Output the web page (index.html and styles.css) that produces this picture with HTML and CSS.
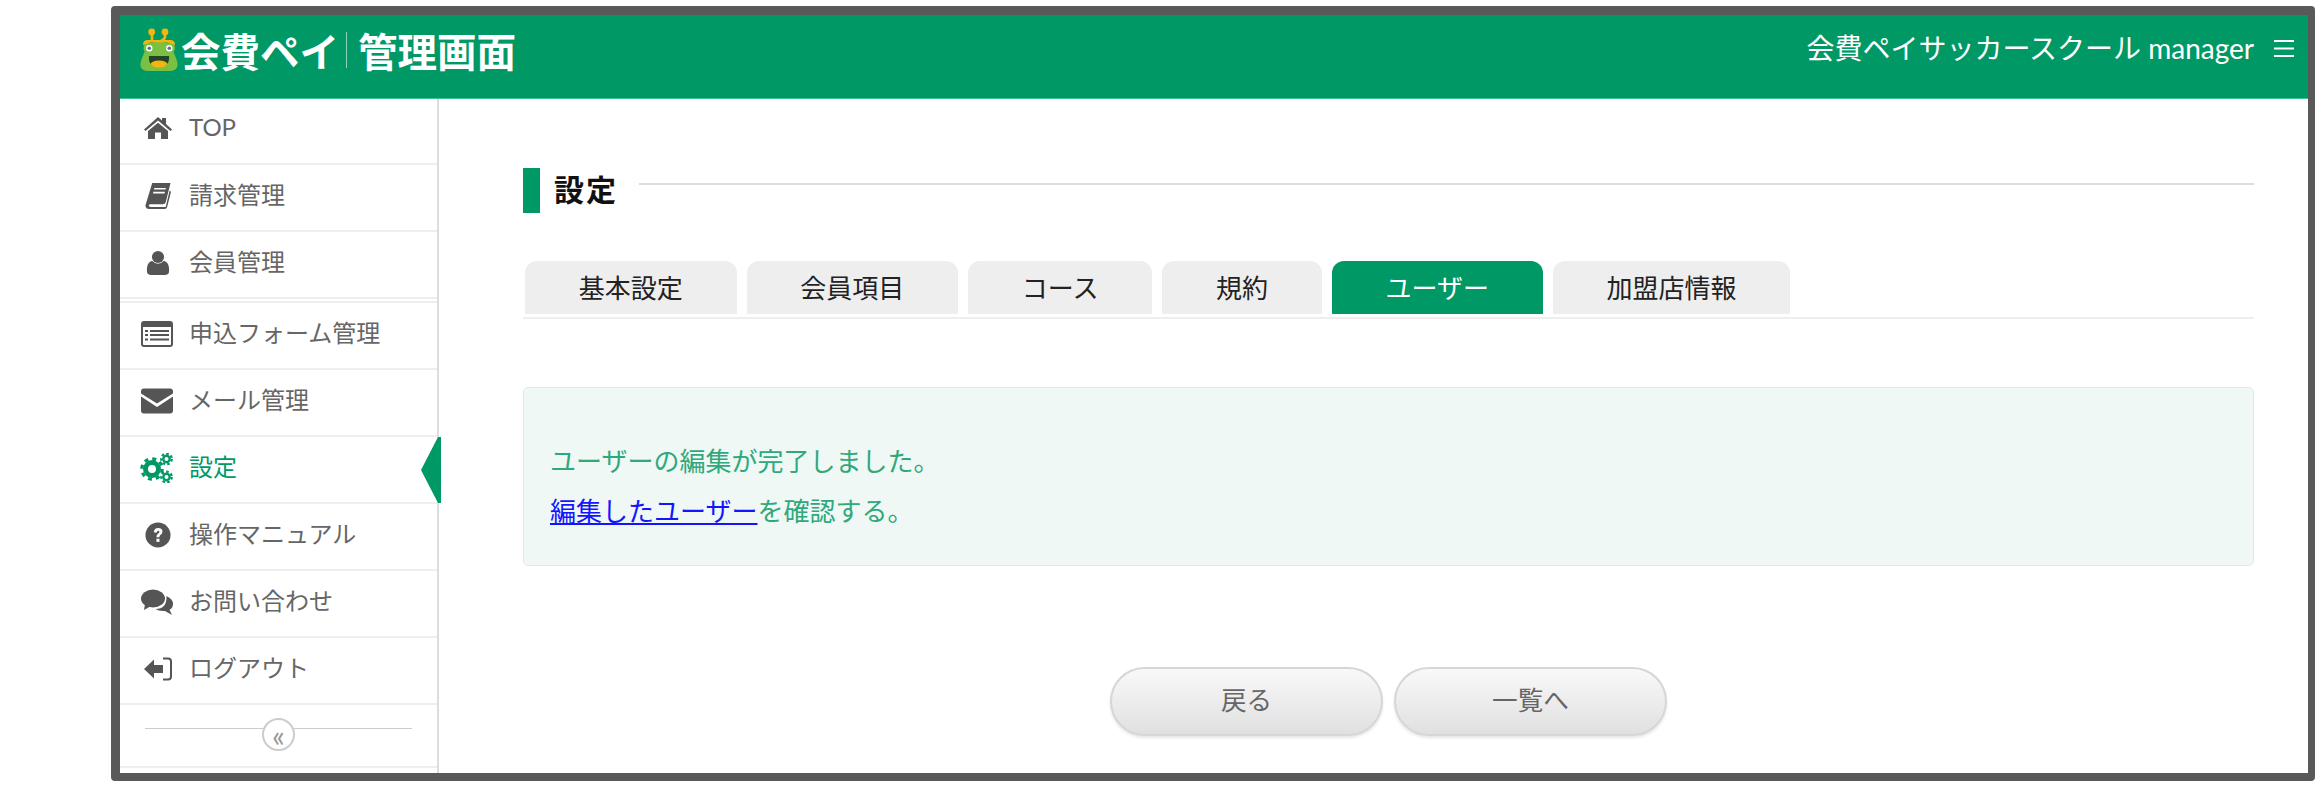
FILE: index.html
```html
<!DOCTYPE html>
<html lang="ja">
<head>
<meta charset="utf-8">
<title>会費ペイ 管理画面</title>
<link rel="stylesheet" href="styles.css">
</head>
<body>
<div class="frame">
  <header class="topbar">
    <div class="logo">
      <svg class="frog" viewBox="0 0 38 44" aria-hidden="true">
        <path d="M12 13 L12 6 M25 5 L25 9 Q25 11 21 13" fill="none" stroke="#f5b50f" stroke-width="2.6"/>
        <circle cx="11.700" cy="4" r="3.400" fill="#f5b50f"/>
        <circle cx="25" cy="4" r="3.400" fill="#f5b50f"/>
        <path d="M8 16 Q19 12 30 16 L36 30 Q41 43 30 43 L8 43 Q-3 43 2 30Z" fill="#7ac143"/>
        <circle cx="9" cy="20" r="5.500" fill="#7ac143"/>
        <circle cx="29.500" cy="20" r="5.500" fill="#7ac143"/>
        <path d="M3 17 Q3 12 8 12 L30 12 Q35 12 35 17 L32 16 Q30 14.500 27 14.500 L11 14.500 Q8 14.500 6 16Z" fill="#f5b50f"/>
        <circle cx="9.300" cy="20.300" r="3.200" fill="#fff"/>
        <circle cx="29.300" cy="20.300" r="3.200" fill="#fff"/>
        <circle cx="9.300" cy="20.300" r="1.800" fill="#4e7a8c"/>
        <circle cx="29.300" cy="20.300" r="1.800" fill="#4e7a8c"/>
        <path d="M9 28 L29 28 Q30 39 19 39 Q8 39 9 28Z" fill="#24442a"/>
        <path d="M10.500 36 Q12 32.500 19 32.500 Q26 32.500 27.500 36 Q25 39.500 19 39.500 Q13 39.500 10.500 36Z" fill="#f5b50f"/>
      </svg>
      <span class="logo-name">会費ペイ</span>
      <span class="logo-sep"></span>
      <span class="logo-name">管理画面</span>
    </div>
    <div class="account">
      <span>会費ペイサッカースクール manager</span>
      <svg class="burger" viewBox="0 0 20 17" aria-hidden="true"><path d="M0 1h20M0 8.500h20M0 16h20" stroke="#fff" stroke-width="2" fill="none"/></svg>
    </div>
  </header>
  <div class="body-row">
    <nav class="sidebar">
      <ul class="menu">
        <li class="menu-item"><svg class="ico ico-home" viewBox="0 0 28 24"><path d="M14 1 L18 4.600 V2 H22 V8 L28 13.500 L26.500 15 L14 4.500 L1.500 15 L0 13.500Z M14 6.800 L24 15 V23 H17 V16.500 H11 V23 H4 V15Z" fill="#555"/></svg><span>TOP</span></li>
        <li class="menu-item"><svg class="ico" viewBox="0 1 28 27"><path d="M8 1 H27 L22 21 Q21.500 23 19 23 H6 Q4 23 4.500 25 Q5 26 7 26 H22 L26 9 L27.500 10 L23.500 26 Q23 28 21 28 H5 Q1 28 1 24 Z" fill="#555"/><path d="M10 7h12M9 11h12" stroke="#fff" stroke-width="1.600"/></svg><span>請求管理</span></li>
        <li class="menu-item"><svg class="ico" viewBox="0 0 28 28"><circle cx="14" cy="7.500" r="6.500" fill="#555"/><path d="M7.500 11.500 Q14 18 20.500 11.500 Q26 13 26 22 Q26 27 21 27 H7 Q2 27 2 22 Q2 13 7.500 11.500Z" fill="#555"/></svg><span>会員管理</span></li>
      </ul>
      <ul class="menu menu-second">
        <li class="menu-item"><svg class="ico ico-wide" viewBox="0 0 32 26"><rect x="1" y="1" width="30" height="24" rx="2" fill="#fff" stroke="#555" stroke-width="2"/><rect x="1" y="1" width="30" height="5" fill="#555"/><path d="M4 10h3M9 10h19M4 14h3M9 14h19M4 18.500h3M9 18.500h19" stroke="#555" stroke-width="2.200"/></svg><span>申込フォーム管理</span></li>
        <li class="menu-item"><svg class="ico ico-wide" viewBox="0 0 32 25"><path d="M3 0 H29 Q32 0 32 3 V5 L16 15 L0 5 V3 Q0 0 3 0Z M0 8 L16 18.500 L32 8 V22 Q32 25 29 25 H3 Q0 25 0 22Z" fill="#555"/></svg><span>メール管理</span></li>
        <li class="menu-item menu-active"><svg class="ico ico-gears" viewBox="0 0 33 30"><g fill="none" stroke="#096"><circle cx="12" cy="16" r="6.500" stroke-width="5"/><circle cx="12" cy="16" r="10.200" stroke-width="3.200" stroke-dasharray="4 4"/><circle cx="26.500" cy="6" r="3.200" stroke-width="2.400"/><circle cx="26.500" cy="6" r="5.300" stroke-width="2.200" stroke-dasharray="2.600 2.200"/><circle cx="26.500" cy="24" r="3.200" stroke-width="2.400"/><circle cx="26.500" cy="24" r="5.300" stroke-width="2.200" stroke-dasharray="2.600 2.200"/></g></svg><span>設定</span><i class="arrow"></i></li>
        <li class="menu-item"><svg class="ico" viewBox="0 0 28 28"><circle cx="14" cy="14" r="13.500" fill="#555"/><path d="M9.500 11 Q10 6.500 14.200 6.500 Q18.800 6.500 18.800 10.500 Q18.800 12.800 16.500 14 Q15.500 14.700 15.500 16.500 H12.300 Q12.200 13.500 14.300 12.300 Q15.500 11.600 15.500 10.700 Q15.500 9.500 14.200 9.500 Q12.900 9.500 12.500 11.500Z" fill="#fff"/><rect x="12.300" y="18" width="3.300" height="3.400" fill="#fff"/></svg><span>操作マニュアル</span></li>
        <li class="menu-item"><svg class="ico ico-wide" viewBox="0 0 32 26"><ellipse cx="12" cy="9.500" rx="12" ry="9" fill="#555"/><path d="M4 15 L3 21 L10 17Z" fill="#555"/><path d="M25.500 7 Q32 10 32 15 Q32 19 28.500 20.800 L31 26 L24 22 Q18 22.500 14.500 20 Q26 20 25.500 7Z" fill="#555"/></svg><span>お問い合わせ</span></li>
        <li class="menu-item"><svg class="ico" viewBox="0 0 28 24"><path d="M0 12 L10 2.500 V8 H19 V16 H10 V21.500Z" fill="#555"/><path d="M19 1.500 H24 Q27 1.500 27 4.500 V19.500 Q27 22.500 24 22.500 H19" fill="none" stroke="#555" stroke-width="2"/></svg><span>ログアウト</span></li>
      </ul>
      <div class="collapse">
        <div class="collapse-line"></div>
        <button class="collapse-btn" type="button">«</button>
      </div>
    </nav>
    <main class="main">
      <div class="page-title">
        <span class="title-bar"></span>
        <h1>設定</h1>
        <span class="title-rule"></span>
      </div>
      <ul class="tabs">
        <li class="tab">基本設定</li>
        <li class="tab">会員項目</li>
        <li class="tab">コース</li>
        <li class="tab">規約</li>
        <li class="tab tab-active">ユーザー</li>
        <li class="tab">加盟店情報</li>
      </ul>
      <div class="notice">
        <p>ユーザーの編集が完了しました。</p>
        <p><a href="#">編集したユーザー</a>を確認する。</p>
      </div>
      <div class="actions">
        <button class="pill" type="button">戻る</button>
        <button class="pill" type="button">一覧へ</button>
      </div>
    </main>
  </div>
</div>
</body>
</html>
```
FILE: styles.css
```css
* { box-sizing: border-box; }
html, body { margin: 0; height: 100%; background: #fff; }
body {
  padding: 6px 2px 5px 111px;
  font-family: "Lato", "Noto Sans CJK JP", sans-serif;
  overflow: hidden;
}
.frame {
  height: 775px;
  border: 8px solid #595959;
  border-width: 9px 7px 8px 9px;
  border-radius: 4px;
  display: flex;
  flex-direction: column;
  overflow: hidden;
  background: #fff;
}
.topbar {
  flex: 0 0 84px;
  background: #096;
  border-bottom: 1px solid #3cc592;
  display: flex;
  justify-content: space-between;
  align-items: flex-start;
  color: #fff;
}
.logo { display: flex; align-items: center; padding: 13px 0 0 20px; }
.frog { width: 38px; height: 44px; margin-right: 3px; }
.logo-name { font-size: 39.500px; line-height: 44px; font-weight: 700; font-family: "Noto Sans CJK JP", sans-serif; }
.logo-sep { width: 1px; height: 36px; background: #8fd3b8; margin: 0 11px 0 7px; }
.account { display: flex; align-items: center; font-size: 28px; line-height: 40px; padding: 13px 14px 0 0; }
.burger { width: 20px; height: 17px; margin-left: 20px; }
.body-row { flex: 1; display: flex; min-height: 0; }
.sidebar { flex: 0 0 319px; border-right: 2px solid #ddd; color: #666; font-size: 24px; }
.menu { list-style: none; margin: -1px 0 0; padding: 0; }
.menu-second { margin-top: 2px; border-top: 2px solid #eee; }
.menu-item {
  position: relative;
  height: 67px;
  border-bottom: 2px solid #eee;
  display: flex;
  align-items: center;
  padding-left: 69px;
  padding-bottom: 8px;
}
.ico { position: absolute; left: 24px; top: 18px; width: 28px; height: 26px; }
.ico-home { top: 17px; }
.ico-wide { left: 21px; width: 32px; }
.ico-gears { left: 20px; top: 16px; width: 33px; height: 30px; }
.menu-active { color: #096; }
.arrow {
  position: absolute;
  right: -4px;
  top: 0;
  width: 20px;
  height: 66px;
  background: #096;
  clip-path: polygon(100% 0, 100% 100%, 85% 100%, 0 50%, 85% 0);
}
.collapse { position: relative; height: 63px; padding-top: 23px; border-bottom: 2px solid #eee; }
.collapse-line { margin: 0 25px; height: 1px; background: #ccc; }
.collapse-btn {
  position: absolute;
  left: 142px;
  top: 13px;
  width: 33px;
  height: 33px;
  padding: 0 0 5px;
  border: 2px solid #ccc;
  border-radius: 50%;
  background: #fff;
  color: #999;
  font-size: 30px;
  line-height: 1;
  font-family: "Lato", sans-serif;
}
.main { flex: 1; padding: 69px 54px 0 84px; }
.page-title { display: flex; align-items: center; height: 45px; }
.title-bar { width: 17px; height: 45px; background: #096; }
h1 { margin: 0 21px 0 14px; padding-bottom: 4px; font-size: 30px; letter-spacing: 2px; line-height: 41px; font-weight: 700; color: #111; font-family: "Noto Sans CJK JP", sans-serif; }
.title-rule { flex: 1; height: 2px; margin-bottom: 14px; background: #ddd; }
.tabs {
  list-style: none;
  margin: 48px 0 0;
  padding: 0 0 3px 2px;
  border-bottom: 2px solid #eee;
  display: flex;
  gap: 10px;
}
.tab {
  height: 53px;
  padding: 0 53.750px;
  border-radius: 12px 12px 0 0;
  background: #eee;
  color: #222;
  font-size: 26px;
  line-height: 55px;
}
.tab-active { background: #096; color: #fff; }
.notice {
  margin-top: 68px;
  height: 179px;
  padding: 48px 26px 0;
  background: #eff8f5;
  border: 1px solid #d9efe6;
  border-radius: 5px;
  color: #2fa87c;
  font-size: 26px;
  line-height: 50px;
}
.notice p { margin: 0; }
.notice a { color: #1414ff; text-decoration: underline; }
.actions { display: flex; justify-content: center; gap: 11px; margin-top: 101px; }
.pill {
  width: 273px;
  height: 69px;
  border: 2px solid #d6d6d6;
  border-radius: 35px;
  background: linear-gradient(#f9f9f9, #e0e0e0);
  box-shadow: 0 2px 3px rgba(0,0,0,.1);
  color: #666;
  font-size: 25.600px;
  font-family: "Noto Sans CJK JP", sans-serif;
  padding: 0 0 6px;
}
```
